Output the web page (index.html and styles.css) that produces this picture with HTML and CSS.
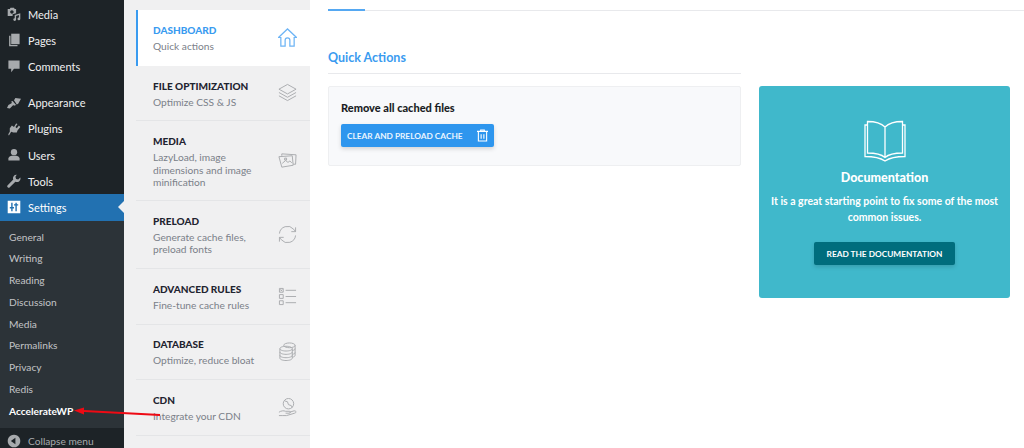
FILE: index.html
```html
<!DOCTYPE html>
<html>
<head>
  <title>AccelerateWP</title>
  <meta charset="UTF-8">
  <link rel="stylesheet" href="styles.css">
</head>
<body>
  <div class="admin-menu">
    <ul class="menu-group">
      <li class="menu-item"><svg class="menu-icon" viewBox="0 0 20 20"><path fill-rule="evenodd" d="M1 3h3l1-2h5l1 2h2v6l-5 1.500V13H1zM7 4.500a2.500 2.500 0 1 0 .01 0z"/><path d="M11 11.500l8-2.500v8a2 2 0 1 1-2-2v-3.500l-4 1.200V18a2 2 0 1 1-2-2z"/></svg>Media</li>
      <li class="menu-item"><svg class="menu-icon" viewBox="0 0 20 20"><path d="M6 1h12v15H6z"/><path d="M3 4h2v13h10v2H3z"/></svg>Pages</li>
      <li class="menu-item"><svg class="menu-icon" viewBox="0 0 20 20"><path d="M2 2h16v12h-8l-4 5v-5H2z"/></svg>Comments</li>
    </ul>
    <ul class="menu-group">
      <li class="menu-item"><svg class="menu-icon" viewBox="0 0 20 20"><path d="M12 3l8 1-4 7-2 1-4-6zM8 7l5 6-3 1-1-1-5 5-4-1 2-4 5-3-1-2z"/></svg>Appearance</li>
      <li class="menu-item"><svg class="menu-icon" viewBox="0 0 20 20"><path d="M13 2l2 1-3 4 2 2 3-4 2 2-4 5-1 3H9l-3-1-3 5H2v-2l2-3 0-5 3-4 3 2z"/></svg>Plugins</li>
      <li class="menu-item"><svg class="menu-icon" viewBox="0 0 20 20"><circle cx="10" cy="6" r="4.500"/><path d="M2 18v-3c0-2 3-4 5-4h6c2 0 5 2 5 4v3z"/></svg>Users</li>
      <li class="menu-item"><svg class="menu-icon" viewBox="0 0 20 20"><path d="M14 1a5 5 0 0 0-5 7L1 16a2 2 0 0 0 3 3l8-8a5 5 0 0 0 7-6l-3 3-3-1-1-3z"/></svg>Tools</li>
      <li class="menu-item current"><svg class="menu-icon" viewBox="0 0 20 20"><path fill-rule="evenodd" d="M1 1h18v18H1zM6 4v6H4v2h2v4h2v-4h2v-2H8V4zM12 4v2h-2v2h2v8h2V8h2V6h-2V4z"/></svg>Settings</li>
    </ul>
    <ul class="submenu">
      <li>General</li>
      <li>Writing</li>
      <li>Reading</li>
      <li>Discussion</li>
      <li>Media</li>
      <li>Permalinks</li>
      <li>Privacy</li>
      <li>Redis</li>
      <li class="active">AccelerateWP</li>
    </ul>
    <div class="collapse-row">
      <svg class="collapse-icon" viewBox="0 0 20 20"><path fill-rule="evenodd" d="M10 1a9 9 0 1 1-.01 0zM12 5.500L5.500 10l6.500 4.500z"/></svg>Collapse menu
    </div>
  </div>

  <div class="nav-panel">
    <div class="nav-item selected">
      <div class="nav-text"><h4>DASHBOARD</h4><p>Quick actions</p></div>
      <svg class="nav-icon" viewBox="0 0 20 20"><path d="M.500 10L10 1l9.500 9H17v9h-4.500v-6a2.500 2.500 0 0 0-5 0v6H3v-9z"/></svg>
    </div>
    <div class="nav-item row-file">
      <div class="nav-text"><h4>FILE OPTIMIZATION</h4><p>Optimize CSS &amp; JS</p></div>
      <svg class="nav-icon" viewBox="0 0 20 20"><path d="M10 1.500L19 6.500l-9 5-9-5zM1 10l9 5 9-5M1 13.500l9 5 9-5"/></svg>
    </div>
    <div class="nav-item row-media">
      <div class="nav-text"><h4>MEDIA</h4><p>LazyLoad, image dimensions and image minification</p></div>
      <svg class="nav-icon" viewBox="0 0 20 20"><path d="M4 5V3l15 1-.5 10-2.500-.2M1 6l14-1 1 10-12 2zM4.500 13l3.500-3 2.500 2 2-1.500 2 2M7 7.500h2v2H7z"/></svg>
    </div>
    <div class="nav-item row-preload">
      <div class="nav-text"><h4>PRELOAD</h4><p>Generate cache files, preload fonts</p></div>
      <svg class="nav-icon" viewBox="0 0 20 20"><path d="M1.500 9a8.500 8.500 0 0 1 15-4.500L18.500 7M18.500 2.500V7H14M18.500 11a8.500 8.500 0 0 1-15 4.500L1.500 13M1.500 17.500V13H6"/></svg>
    </div>
    <div class="nav-item row-rules">
      <div class="nav-text"><h4>ADVANCED RULES</h4><p>Fine-tune cache rules</p></div>
      <svg class="nav-icon" viewBox="0 0 20 20"><path d="M1.500 1.500h4v4h-4zM1.500 8h4v4h-4zM1.500 14.500h4v4h-4zM8 3.500h11M8 10h11M8 16.500h11M2.500 2.500l2 2M4.500 2.500l-2 2"/></svg>
    </div>
    <div class="nav-item row-db">
      <div class="nav-text"><h4>DATABASE</h4><p>Optimize, reduce bloat</p></div>
      <svg class="nav-icon" viewBox="0 0 20 20"><path d="M6 3.500C6 2 9 1 12 1s6 1 6 2.500V14c0 1-1 1.700-3 2M6 3.500C6 5 9 6 12 6s6-1 6-2.500M15 9c2-.4 3-1 3-2M15 13c2-.4 3-1 3-2"/><path d="M2 7c0-1.500 3-2.500 6.500-2.500S15 5.500 15 7v10c0 1.500-3 2.500-6.500 2.500S2 18.500 2 17zM2 7c0 1.500 3 2.500 6.500 2.500S15 8.500 15 7M2 10.500c0 1.500 3 2.500 6.500 2.500s6.500-1 6.500-2.500M2 14c0 1.500 3 2.500 6.500 2.500S15 15.500 15 14"/></svg>
    </div>
    <div class="nav-item row-cdn">
      <div class="nav-text"><h4>CDN</h4><p>Integrate your CDN</p></div>
      <svg class="nav-icon" viewBox="0 0 20 20"><circle cx="11" cy="6" r="5.500"/><path d="M7 3l3 1 1 3 3 1 1 2M1 15c2-1.500 5-2 7-1h4c1.500 0 1.500 2 0 2H8M12 15l5-1.500c2.500 0 2.500 2 .5 2.500L9 18.500c-3 .5-5-.5-8 0"/></svg>
    </div>
  </div>

  <div class="main">
    <div class="tab-line"><span class="tab-mark"></span></div>
    <div class="columns">
      <div class="actions">
        <h3 class="section-title">Quick Actions</h3>
        <div class="action-card">
          <div class="action-title">Remove all cached files</div>
          <button class="btn-clear">CLEAR AND PRELOAD CACHE
            <svg class="trash" viewBox="0 0 12 14"><path d="M0 2.500h12M4 2.500V1h4v1.500M1.500 2.500h9V13h-9zM4.500 5.500v5M7.500 5.500v5"/></svg>
          </button>
        </div>
      </div>
      <div class="doc-card">
        <svg class="book" viewBox="0 0 42 42"><path d="M21 7C17 3 10 1.500 3.500 1.500V33c7 0 13.500 1 17.500 4.500C25 34 31.500 33 38.500 33V1.500C32 1.500 25 3 21 7zM21 7v30M3.500 5H1v31.500c7 0 14 .5 20 4.500 6-4 13-4.500 20-4.500V5h-2.500"/></svg>
        <h3>Documentation</h3>
        <p>It is a great starting point to fix some of the most common issues.</p>
        <button class="btn-doc">READ THE DOCUMENTATION</button>
      </div>
    </div>
  </div>

  <svg class="arrow" viewBox="0 0 90 14"><path d="M10 6L86 10" stroke="#ee0a14" stroke-width="1.800"/><path d="M0 5.500L10 2.500V9.500z" fill="#ee0a14"/></svg>
</body>
</html>
```

FILE: styles.css
```css
html, body { margin: 0; height: 448px; overflow: hidden; }
body { display: flex; font-family: Lato, sans-serif; background: #fff; }
ul { list-style: none; margin: 0; padding: 0; }
h3, h4, p { margin: 0; }

/* wp menu */
.admin-menu { width: 124px; flex: none; background: #1d2327; color: #f0f0f1; font-size: 11px; padding-top: 1px; box-sizing: border-box; }
.menu-group { margin-bottom: 10px; }
.menu-group + .menu-group { margin-bottom: 0; }
.menu-item { display: flex; align-items: center; height: 26.2px; padding-left: 7px; gap: 7px; position: relative; }
.menu-icon { width: 14px; height: 14px; fill: #a7aaad; flex: none; }
.menu-item.current { background: #2271b1; color: #fff; }
.menu-item.current .menu-icon { fill: #fff; }
.menu-item.current::after { content: ""; position: absolute; right: 0; top: 7px; border: 6px solid transparent; border-right-color: #f0f0f1; border-left: 0; }
.submenu { background: #2c3338; padding: 6px 0 6px 9px; color: #c3c4c7; font-size: 10.2px; line-height: 21.75px; }
.submenu .active { color: #fff; font-weight: 700; }
.collapse-row { display: flex; align-items: center; gap: 7px; padding-left: 7px; height: 26px; color: #a7aaad; font-size: 10.2px; }
.collapse-icon { width: 14px; height: 14px; fill: #a7aaad; }

/* plugin nav */
.nav-panel { width: 186px; flex: none; background: #f0f0f1; padding: 10px 0 0 12px; box-sizing: border-box; }
.nav-item { display: flex; justify-content: space-between; align-items: center; padding: 0 13px 0 17px; border-bottom: 1px solid #e4e5e7; box-sizing: border-box; height: 55.5px; }
.nav-item.row-media { height: 80px; }
.nav-item.row-preload { height: 68px; }
.nav-item.row-file .nav-text, .nav-item.row-media .nav-text { padding-top: 2px; }
.nav-text { width: 115px; }
.nav-text h4 { font-size: 10px; line-height: 15px; font-weight: 900; color: #1f2430; }
.nav-text p { font-size: 10.2px; line-height: 12.500px; color: #7b8089; margin-top: 2px; }
.nav-icon { width: 19px; height: 19px; fill: none; stroke: #a9abae; stroke-width: 1; flex: none; }
.nav-item.selected { background: #fff; border-left: 2px solid #3a9bf0; border-bottom: 0; padding-left: 15px; }
.nav-item.selected h4 { color: #3a9bf0; }
.nav-item.selected .nav-icon { stroke: #6db4f5; stroke-width: 1.300; }

/* main column */
.main { flex: 1; padding-left: 18px; min-width: 0; }
.tab-line { margin-top: 10px; height: 1px; background: #e8e9ec; position: relative; }
.tab-mark { position: absolute; left: 0; top: -1px; width: 37px; height: 2px; background: #55a8f2; }
.columns { display: flex; gap: 18px; }
.actions { width: 413px; }
.section-title { font-size: 12.500px; line-height: 18px; font-weight: 700; color: #3a9bf0; margin-top: 38px; padding-bottom: 6px; border-bottom: 1px solid #e8e9ec; }
.action-card { margin-top: 12px; height: 80px; box-sizing: border-box; background: #f8f9fb; border: 1px solid #eeeff1; border-radius: 2px; padding: 13px 12px; }
.action-title { font-size: 11px; line-height: 16px; font-weight: 900; color: #1b1e25; }
.btn-clear { display: flex; align-items: center; justify-content: space-between; margin-top: 8px; width: 153px; height: 23px; padding: 0 6px; border: 0; border-radius: 2px; background: #2e96ee; color: #eaf5ff; font-family: inherit; font-size: 8.300px; font-weight: 700; box-shadow: 0 2px 4px rgba(0, 0, 0, .15); }
.trash { width: 11px; height: 13px; fill: none; stroke: #fff; stroke-width: 1.200; }
.doc-card { margin-top: 75px; width: 251px; height: 212px; box-sizing: border-box; background: #40b8cb; border-radius: 3px; color: #fff; text-align: center; padding-top: 34px; }
.book { width: 42px; height: 42px; fill: none; stroke: #fff; stroke-width: 1.300; display: block; margin: 0 auto; }
.doc-card h3 { font-size: 12.500px; line-height: 18px; font-weight: 900; margin-top: 7px; }
.doc-card p { font-size: 10.500px; line-height: 16px; font-weight: 700; margin: 6px 4px 0; }
.btn-doc { margin-top: 17px; width: 141px; height: 23px; padding: 0; border: 0; border-radius: 2px; background: #006d7d; color: #fff; font-family: inherit; font-size: 8.300px; font-weight: 700; box-shadow: 0 2px 4px rgba(0, 0, 0, .15); }

/* annotation on top of the shot */
.arrow { position: absolute; left: 74px; top: 405px; width: 90px; height: 14px; }
```
